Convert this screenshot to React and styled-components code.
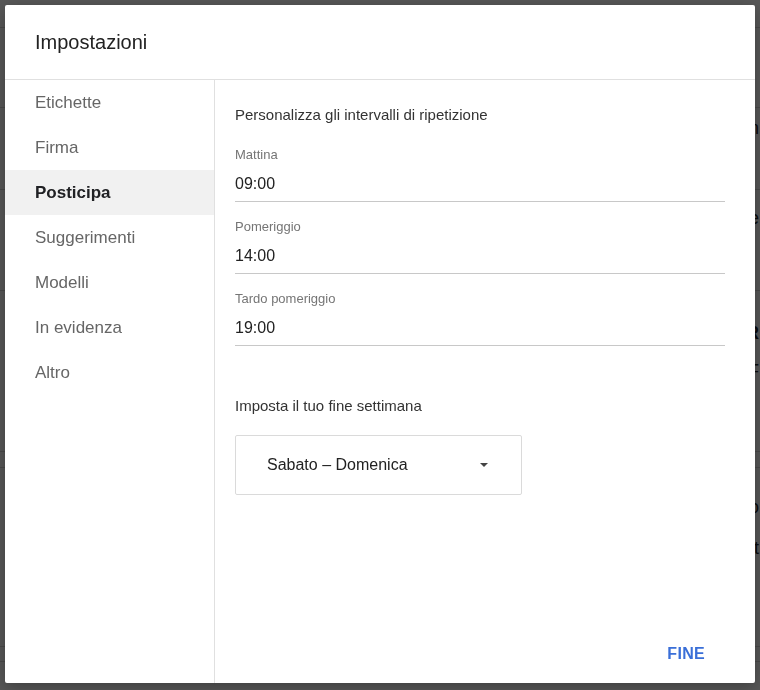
import React, { useState } from "react";
import styled, { createGlobalStyle } from "styled-components";

const GlobalStyle = createGlobalStyle`
  html, body {
    margin: 0;
    padding: 0;
    height: 100%;
    overflow: hidden;
    font-family: "Liberation Sans", Arial, sans-serif;
  }
`;

const navItems = [
  "Etichette",
  "Firma",
  "Posticipa",
  "Suggerimenti",
  "Modelli",
  "In evidenza",
  "Altro",
];

const times = [
  { label: "Mattina", value: "09:00" },
  { label: "Pomeriggio", value: "14:00" },
  { label: "Tardo pomeriggio", value: "19:00" },
];

// the dimmed page behind the dialog
const pageRows = [
  { h: 28, line: true },
  { h: 80, line: true },
  { h: 40, text: "in" },
  { h: 42, line: true },
  { h: 56, text: "e" },
  { h: 45, line: true },
  { h: 23 },
  { h: 38, text: "R", strong: true },
  { h: 38, text: "F" },
  { h: 62, line: true },
  { h: 16, line: true },
  { h: 18 },
  { h: 42, text: "o" },
  { h: 40, text: "t" },
  { h: 79, line: true },
  { h: 15, line: true },
];

const App = () => {
  const [active, setActive] = useState("Posticipa");

  return (
    <>
      <GlobalStyle />
      <Page>
        {pageRows.map((row, i) => (
          <PageRow key={i} $h={row.h} $line={row.line} $strong={row.strong}>
            {row.text}
          </PageRow>
        ))}
      </Page>

      <Overlay>
        <Dialog>
          <Header>Impostazioni</Header>
          <Body>
            <Nav>
              {navItems.map((item) => (
                <NavItem
                  key={item}
                  $active={item === active}
                  onClick={() => setActive(item)}
                >
                  {item}
                </NavItem>
              ))}
            </Nav>

            <Content>
              <SectionTitle>Personalizza gli intervalli di ripetizione</SectionTitle>
              {times.map((t) => (
                <Field key={t.label}>
                  <FieldLabel>{t.label}</FieldLabel>
                  <FieldValue>{t.value}</FieldValue>
                </Field>
              ))}

              <WeekendTitle>Imposta il tuo fine settimana</WeekendTitle>
              <Select>
                <span>Sabato – Domenica</span>
                <Caret />
              </Select>

              <Footer>
                <DoneButton>FINE</DoneButton>
              </Footer>
            </Content>
          </Body>
        </Dialog>
      </Overlay>
    </>
  );
};

const Page = styled.div`
  background: #fff;
  height: 100vh;
  display: flex;
  flex-direction: column;
`;

const PageRow = styled.div`
  height: ${(p) => p.$h}px;
  flex-shrink: 0;
  box-sizing: border-box;
  border-bottom: ${(p) => (p.$line ? "1px solid #d6d6d6" : "none")};
  display: flex;
  align-items: center;
  justify-content: flex-end;
  padding-right: 1px;
  font-size: 18px;
  font-weight: ${(p) => (p.$strong ? 700 : 400)};
  color: #222;
`;

const Overlay = styled.div`
  position: fixed;
  inset: 0;
  background: rgba(0, 0, 0, 0.66);
  padding: 5px 5px 7px;
  display: flex;
  box-sizing: border-box;
`;

const Dialog = styled.div`
  flex: 1;
  background: #fff;
  border-radius: 2px;
  box-shadow: 0 4px 16px rgba(0, 0, 0, 0.3);
  display: flex;
  flex-direction: column;
  overflow: hidden;
`;

const Header = styled.div`
  height: 75px;
  flex-shrink: 0;
  box-sizing: border-box;
  padding: 1px 30px 0;
  display: flex;
  align-items: center;
  font-size: 20px;
  color: #222;
  border-bottom: 1px solid #e0e0e0;
`;

const Body = styled.div`
  flex: 1;
  display: flex;
`;

const Nav = styled.nav`
  width: 209px;
  flex-shrink: 0;
  border-right: 1px solid #e0e0e0;
`;

const NavItem = styled.div`
  height: 45px;
  display: flex;
  align-items: center;
  padding-left: 30px;
  font-size: 17px;
  color: ${(p) => (p.$active ? "#202124" : "#666")};
  font-weight: ${(p) => (p.$active ? 700 : 400)};
  background: ${(p) => (p.$active ? "#f1f1f1" : "transparent")};
  cursor: pointer;
`;

const Content = styled.div`
  flex: 1;
  display: flex;
  flex-direction: column;
  padding: 26px 30px 0 20px;
`;

const SectionTitle = styled.div`
  font-size: 15px;
  color: #333;
  margin-bottom: 24px;
`;

const Field = styled.div`
  border-bottom: 1px solid #c8c8c8;
  margin-bottom: 17px;
  padding-bottom: 8px;
`;

const FieldLabel = styled.div`
  font-size: 13px;
  color: #757575;
  margin-bottom: 13px;
`;

const FieldValue = styled.div`
  font-size: 16px;
  color: #222;
`;

const WeekendTitle = styled.div`
  margin-top: 34px;
  font-size: 15px;
  color: #333;
  margin-bottom: 21px;
`;

const Select = styled.div`
  width: 287px;
  height: 60px;
  box-sizing: border-box;
  border: 1px solid #dadada;
  border-radius: 2px;
  display: flex;
  align-items: center;
  justify-content: space-between;
  padding: 0 33px 0 31px;
  font-size: 16px;
  color: #222;
`;

const Caret = styled.span`
  width: 0;
  height: 0;
  border-left: 4px solid transparent;
  border-right: 4px solid transparent;
  border-top: 4px solid #444;
`;

const Footer = styled.div`
  margin-top: auto;
  display: flex;
  justify-content: flex-end;
  padding-bottom: 20px;
`;

const DoneButton = styled.button`
  background: none;
  border: none;
  font-family: inherit;
  font-size: 16px;
  font-weight: 700;
  color: #3a6fd8;
  letter-spacing: 0.3px;
  padding: 0 20px 0 0;
  cursor: pointer;
`;

export default App;
